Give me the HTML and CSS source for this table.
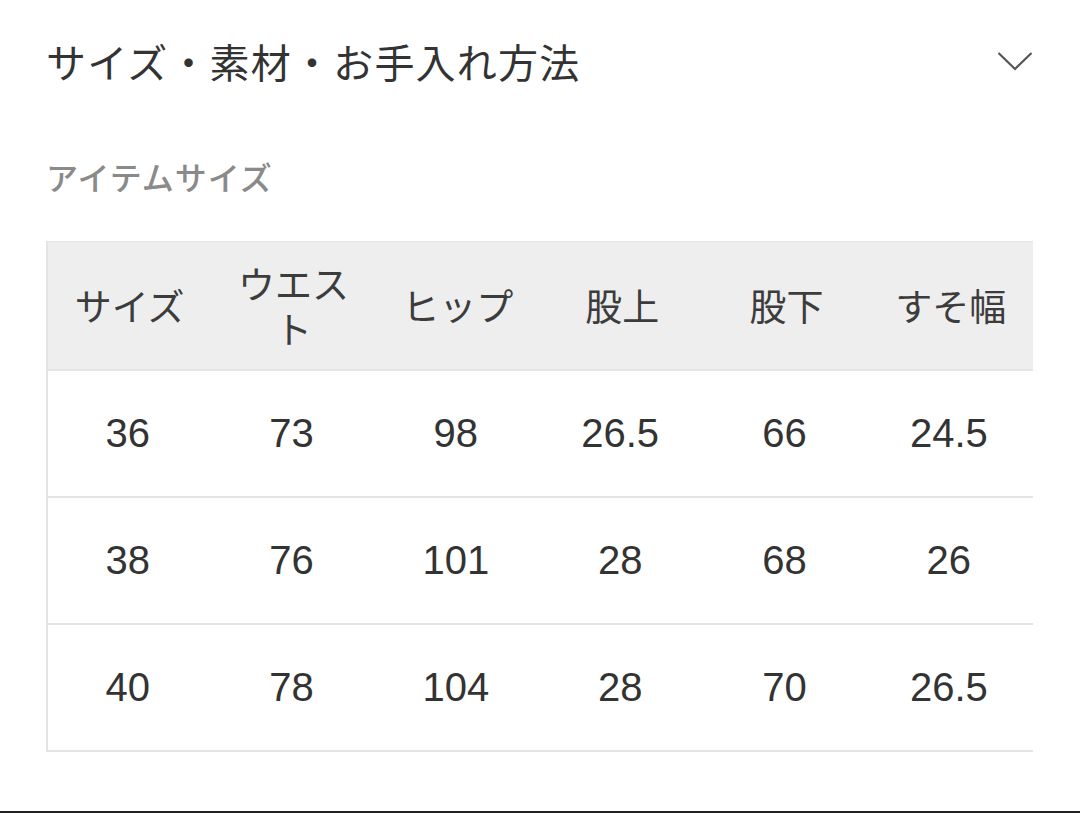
FILE: index.html
```html
<!DOCTYPE html>
<html lang="ja">
<head>
<meta charset="utf-8">
<link rel="stylesheet" href="styles.css">
</head>
<body>
<div class="page">
  <div class="accordion-head">
    <h2 class="title">サイズ・素材・お手入れ方法</h2>
    <svg class="chevron" width="36" height="20" viewBox="0 0 36 20"><path d="M1.5 2 L18 18 L34.5 2" fill="none" stroke="#555" stroke-width="2.2"/></svg>
  </div>
  <div class="subtitle">アイテムサイズ</div>
  <div class="table-wrap">
    <table class="size-table">
      <thead>
        <tr><th>サイズ</th><th>ウエスト</th><th>ヒップ</th><th>股上</th><th>股下</th><th>すそ幅</th></tr>
      </thead>
      <tbody>
        <tr><td>36</td><td>73</td><td>98</td><td>26.5</td><td>66</td><td>24.5</td></tr>
        <tr><td>38</td><td>76</td><td>101</td><td>28</td><td>68</td><td>26</td></tr>
        <tr><td>40</td><td>78</td><td>104</td><td>28</td><td>70</td><td>26.5</td></tr>
      </tbody>
    </table>
  </div>
</div>
<div class="bottom-line"></div>
</body>
</html>
```

FILE: styles.css
```css
html, body {
  margin: 0;
  padding: 0;
  background: #fff;
  width: 1080px;
  height: 813px;
  overflow: hidden;
}
body {
  display: flex;
  flex-direction: column;
  font-family: "Noto Sans CJK JP", "Liberation Sans", sans-serif;
}
.page {
  flex: 1;
  padding: 0 47px 0 46px;
}
.accordion-head {
  display: flex;
  align-items: center;
  justify-content: space-between;
  height: 122px;
}
.title {
  margin: 0;
  font-size: 40px;
  font-weight: 400;
  color: #333;
  letter-spacing: 1.2px;
  line-height: 1;
}
.chevron {
  display: block;
}
.subtitle {
  font-size: 32px;
  font-weight: 500;
  color: #8a8a8a;
  line-height: 1;
  letter-spacing: 1px;
  margin-top: 38px;
  height: 81px;
}
.table-wrap {
  width: 987px;
  overflow: hidden;
}
.size-table {
  width: 987px;
  border-collapse: collapse;
  table-layout: fixed;
  border-left: 2px solid #e4e4e4;
}
.size-table th {
  background: #eeeeee;
  height: 127px;
  padding: 0 24px;
  font-size: 37px;
  font-weight: 400;
  color: #3c3c3c;
  line-height: 45px;
  text-align: center;
  border-top: 1px solid #e6e6e6;
  border-bottom: 2px solid #e4e4e4;
}
.size-table td {
  height: 125px;
  padding: 0 4px 0 0;
  text-align: center;
  font-family: "Liberation Sans", "Noto Sans CJK JP", sans-serif;
  font-size: 40px;
  color: #333;
  border-bottom: 2px solid #e4e4e4;
}
.bottom-line {
  height: 2px;
  background: #222;
}
```
